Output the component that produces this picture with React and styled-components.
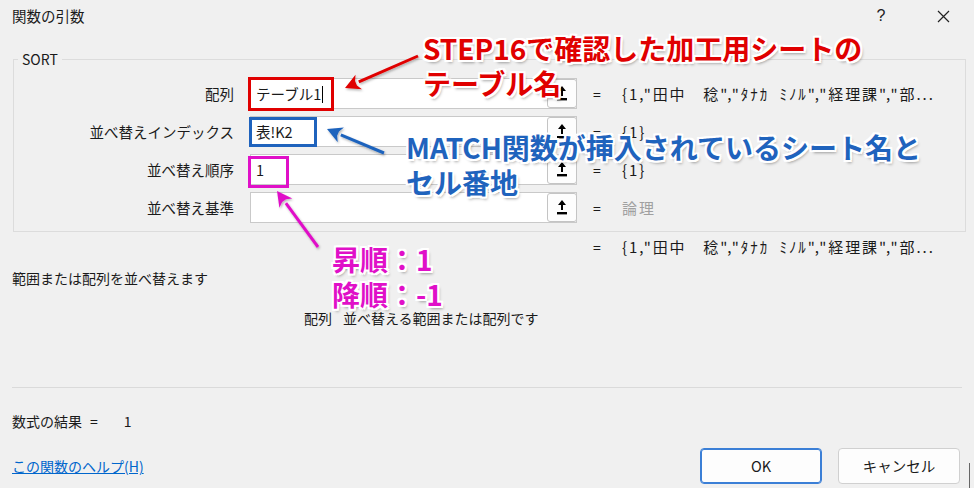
import React from "react";
import styled, { createGlobalStyle, css } from "styled-components";

const GlobalStyle = createGlobalStyle`
  html, body {
    margin: 0;
    padding: 0;
    background: #f0f0f0;
  }
  body {
    font-family: "Noto Sans CJK JP", "Noto Sans", sans-serif;
    color: #1a1a1a;
  }
`;

const Dialog = styled.div`
  position: relative;
  width: 974px;
  height: 488px;
  background: #f0f0f0;
  overflow: hidden;
  font-size: 14px;
  line-height: 20px;
`;

const TitleBar = styled.div`
  display: flex;
  align-items: center;
  height: 32px;
  padding-left: 12px;
`;

const Title = styled.div`
  flex: 1;
  font-size: 14.5px;
`;

const TitleButton = styled.div`
  width: 62px;
  display: flex;
  justify-content: center;
  align-items: center;
  font-family: "Liberation Sans", sans-serif;
  font-size: 16px;
  color: #222;
`;

const GroupBox = styled.fieldset`
  margin: 19px 0 0 13px;
  width: 953px;
  height: 181px;
  box-sizing: border-box;
  border: 1px solid #dcdcdc;
  padding: 11px 0 0 0;
  display: flex;
  flex-direction: column;
  gap: 7px;
`;

const Legend = styled.legend`
  margin-left: 4px;
  padding: 0 4px 0 4px;
  font-size: 14px;
  line-height: 16px;
`;

const ArgRow = styled.div`
  display: flex;
  align-items: center;
  height: 31px;
`;

const Label = styled.div`
  width: 220px;
  text-align: right;
  font-size: 14.5px;
`;

const InputBox = styled.div`
  margin-left: 16px;
  width: 327px;
  height: 31px;
  box-sizing: border-box;
  background: #fff;
  border: 1px solid #c9c9c9;
  display: flex;
  align-items: center;
`;

const InputText = styled.div`
  flex: 1;
  padding-left: 5px;
  font-size: 14.5px;
  ${({ $caret }) =>
    $caret &&
    css`
      &::after {
        content: "";
        display: inline-block;
        width: 1px;
        height: 17px;
        background: #000;
        vertical-align: -3px;
        margin-left: 1px;
      }
    `}
`;

const RefButton = styled.div`
  width: 30px;
  height: 29px;
  box-sizing: border-box;
  border: 1px solid #c4c4c4;
  border-radius: 3px;
  background: #fdfdfd;
  display: flex;
  align-items: center;
  justify-content: center;
  margin-right: -1px;
`;

const Eq = styled.div`
  margin-left: ${({ $flush }) => ($flush ? "0" : "16px")};
  width: 29px;
  font-size: 14px;
`;

const Value = styled.div`
  font-size: 15px;
  letter-spacing: 1.9px;
  white-space: pre;
  color: ${({ $muted }) => ($muted ? "#a0a0a0" : "#1a1a1a")};
`;

const ResultRow = styled.div`
  display: flex;
  align-items: center;
  margin-top: 6px;
  padding-left: 593px;
  height: 18px;
`;

const Description = styled.div`
  padding-left: 12px;
  margin-top: 12px;
  font-size: 14px;
`;

const ArgDescription = styled.div`
  padding-left: 304px;
  margin-top: 20px;
  font-size: 14px;
  display: flex;
  gap: 11px;
`;

const Separator = styled.div`
  margin: 59px 12px 0 12px;
  height: 1px;
  background: #dadada;
`;

const FormulaResult = styled.div`
  padding-left: 12px;
  margin-top: 23px;
  font-size: 14px;
  display: flex;
  gap: 8px;
`;

const ResultValue = styled.span`
  margin-left: 18px;
`;

const Footer = styled.div`
  display: flex;
  align-items: center;
  margin-top: 17px;
  padding: 0 14px 0 12px;
  gap: 16px;
`;

const HelpLink = styled.a`
  flex: 1;
  color: #0066cc;
  text-decoration: underline;
  font-size: 14px;
`;

const Button = styled.div`
  width: 122px;
  height: 36px;
  box-sizing: border-box;
  border-radius: 4px;
  background: #fdfdfd;
  display: flex;
  align-items: center;
  justify-content: center;
  font-size: 14.5px;
  border: 1px solid ${({ $primary }) => ($primary ? "#3b7fd6" : "#d0d0d0")};
  ${({ $primary }) =>
    $primary &&
    css`
      box-shadow: inset 0 0 0 1px #3b7fd6;
    `}
`;

const EdgeLine = styled.div`
  position: absolute;
  right: 4px;
  top: 463px;
  width: 1px;
  height: 25px;
  background: #666;
`;

/* annotation overlays */
const Highlight = styled.div`
  position: absolute;
  box-sizing: border-box;
  border: 3px solid ${({ $color }) => $color};
  pointer-events: none;
`;

const Callout = styled.div`
  position: absolute;
  font-family: "Noto Sans CJK JP", sans-serif;
  font-weight: 700;
  font-size: 28px;
  line-height: 35px;
  white-space: nowrap;
  color: ${({ $color }) => $color};
  text-shadow: -2px -2px 0 #fff, 2px -2px 0 #fff, -2px 2px 0 #fff,
    2px 2px 0 #fff, 0 -2px 0 #fff, 0 2px 0 #fff, -2px 0 0 #fff, 2px 0 0 #fff,
    2px 3px 3px rgba(0, 0, 0, 0.35);
`;

const ArrowLayer = styled.svg`
  position: absolute;
  left: 0;
  top: 0;
  pointer-events: none;
`;

const RefIcon = () => (
  <svg width="12" height="17" viewBox="0 0 12 17">
    <path d="M6 1 L2 6 H5 V11 H7 V6 H10 Z" fill="#000" />
    <rect x="1" y="13" width="10" height="2.4" fill="#000" />
  </svg>
);

const CloseIcon = () => (
  <svg width="13" height="13" viewBox="0 0 13 13">
    <path d="M1 1 L12 12 M12 1 L1 12" stroke="#222" strokeWidth="1.2" />
  </svg>
);

const Arrow = ({ from, to, color }) => {
  const [x1, y1] = from;
  const [x2, y2] = to;
  const ang = Math.atan2(y2 - y1, x2 - x1);
  const len = 15;
  const wid = 8;
  const cx = Math.cos(ang);
  const sy = Math.sin(ang);
  const bx = x2 - cx * len;
  const by = y2 - sy * len;
  const px = -sy * wid;
  const py = cx * wid;
  const points = [
    [x2, y2],
    [bx + px, by + py],
    [bx + px * 0.3 + cx * 3, by + py * 0.3 + sy * 3],
    [bx - px * 0.3 + cx * 3, by - py * 0.3 + sy * 3],
    [bx - px, by - py],
  ]
    .map((p) => p.join(","))
    .join(" ");
  return (
    <g filter="url(#arrowShadow)">
      <line x1={x1} y1={y1} x2={bx} y2={by} stroke={color} strokeWidth="3" />
      <polygon points={points} fill={color} />
    </g>
  );
};

const sampleValue = "{1,\"田中　稔\",\"ﾀﾅｶ  ﾐﾉﾙ\",\"経理課\",\"部...";

const args = [
  { label: "配列", text: "テーブル1", caret: true, value: sampleValue },
  { label: "並べ替えインデックス", text: "表!K2", value: "{1}" },
  { label: "並べ替え順序", text: "1", value: "{1}" },
  { label: "並べ替え基準", text: "", value: "論理", muted: true },
];

export default function App() {
  return (
    <>
      <GlobalStyle />
      <Dialog>
        <TitleBar>
          <Title>関数の引数</Title>
          <TitleButton>?</TitleButton>
          <TitleButton>
            <CloseIcon />
          </TitleButton>
        </TitleBar>

        <GroupBox>
          <Legend>SORT</Legend>
          {args.map((a) => (
            <ArgRow key={a.label}>
              <Label>{a.label}</Label>
              <InputBox>
                <InputText $caret={a.caret}>{a.text}</InputText>
                <RefButton>
                  <RefIcon />
                </RefButton>
              </InputBox>
              <Eq>=</Eq>
              <Value $muted={a.muted}>{a.value}</Value>
            </ArgRow>
          ))}
        </GroupBox>

        <ResultRow>
          <Eq $flush>=</Eq>
          <Value>{sampleValue}</Value>
        </ResultRow>

        <Description>範囲または配列を並べ替えます</Description>

        <ArgDescription>
          <span>配列</span>
          <span>並べ替える範囲または配列です</span>
        </ArgDescription>

        <Separator />

        <FormulaResult>
          <span>数式の結果</span>
          <span>=</span>
          <ResultValue>1</ResultValue>
        </FormulaResult>

        <Footer>
          <HelpLink>この関数のヘルプ(H)</HelpLink>
          <Button $primary>OK</Button>
          <Button>キャンセル</Button>
        </Footer>

        <EdgeLine />

        <Highlight $color="#e00000" style={{ left: 248, top: 77, width: 86, height: 34 }} />
        <Highlight $color="#1f63bd" style={{ left: 249, top: 117, width: 68, height: 30 }} />
        <Highlight $color="#e010c8" style={{ left: 248, top: 156, width: 41, height: 32 }} />

        <ArrowLayer width="974" height="488">
          <defs>
            <filter id="arrowShadow" x="-20%" y="-20%" width="140%" height="140%">
              <feDropShadow dx="1" dy="1.5" stdDeviation="1" floodColor="#000" floodOpacity="0.3" />
            </filter>
          </defs>
          <Arrow from={[418, 56]} to={[345, 88]} color="#e00000" />
          <Arrow from={[384, 153]} to={[327, 129]} color="#1f63bd" />
          <Arrow from={[318, 247]} to={[277, 191]} color="#e010c8" />
        </ArrowLayer>

        <Callout $color="#e00000" style={{ left: 423, top: 31 }}>
          STEP16で確認した加工用シートの
          <br />
          テーブル名
        </Callout>
        <Callout $color="#1f63bd" style={{ left: 406, top: 130 }}>
          MATCH関数が挿入されているシート名と
          <br />
          セル番地
        </Callout>
        <Callout $color="#e010c8" style={{ left: 332, top: 242 }}>
          昇順：1
          <br />
          降順：-1
        </Callout>
      </Dialog>
    </>
  );
}
